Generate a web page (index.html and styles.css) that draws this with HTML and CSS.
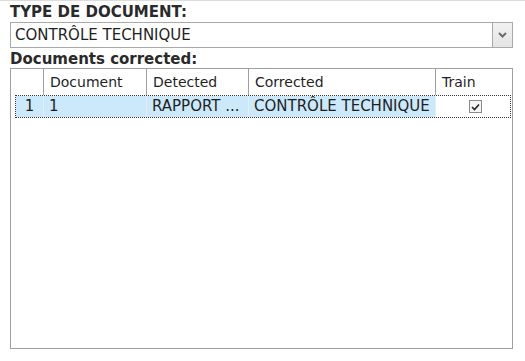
FILE: index.html
```html
<!DOCTYPE html>
<html>
<head>
<meta charset="utf-8">
<link rel="stylesheet" href="styles.css">
</head>
<body>
<div class="topline"></div>
<div class="panel">
  <div class="label">TYPE DE DOCUMENT:</div>
  <div class="combo">
    <div class="combo-text">CONTRÔLE TECHNIQUE</div>
    <div class="combo-btn">
      <svg width="9" height="6" viewBox="0 0 9 6"><path d="M1 1 L4.5 4.5 L8 1" fill="none" stroke="#6d6d6d" stroke-width="2"/></svg>
    </div>
  </div>
  <div class="label label2">Documents corrected:</div>
  <div class="grid">
    <div class="head">
      <div class="hc c0"></div>
      <div class="hc c1">Document</div>
      <div class="hc c2">Detected</div>
      <div class="hc c3">Corrected</div>
      <div class="hc c4">Train</div>
    </div>
    <div class="row">
      <div class="rc c0">1</div>
      <div class="rc c1">1</div>
      <div class="rc c2">RAPPORT ...</div>
      <div class="rc c3">CONTRÔLE TECHNIQUE</div>
      <div class="rc c4 train">
        <span class="check"><svg width="9" height="8" viewBox="0 0 9 8"><path d="M1 4 L3.5 6.5 L8 1.5" fill="none" stroke="#222" stroke-width="1.6"/></svg></span>
      </div>
    </div>
  </div>
</div>
</body>
</html>
```

FILE: styles.css
```css
html, body {
  margin: 0;
  padding: 0;
  background: #ffffff;
}
body {
  width: 525px;
  height: 361px;
  overflow: hidden;
  font-family: "DejaVu Sans", sans-serif;
  color: #1f1f1f;
}
.topline {
  height: 1px;
  background: #dcdcdc;
}
.panel {
  padding: 2px 12px 0 10px;
  display: flex;
  flex-direction: column;
}
.label {
  font-weight: bold;
  font-size: 15px;
  line-height: 18px;
  height: 19px;
  color: #2a2a2a;
}
.label2 {
  margin-top: 2px;
  height: 18px;
}
.combo {
  height: 24px;
  border: 1px solid #a9a9a9;
  display: flex;
  align-items: stretch;
}
.combo-text {
  flex: 1;
  font-size: 15px;
  line-height: 24px;
  padding-left: 4px;
}
.combo-btn {
  width: 19px;
  border-left: 1px solid #a9a9a9;
  background: linear-gradient(#f2f2f2, #e4e4e4);
  display: flex;
  align-items: center;
  justify-content: center;
}
.grid {
  height: 279px;
  border: 1px solid #a0a0a0;
  display: flex;
  flex-direction: column;
}
.head, .row {
  display: grid;
  grid-template-columns: 33px 103px 102px 187px 1fr;
}
.head {
  height: 25px;
}
.hc {
  font-size: 14px;
  line-height: 26px;
  padding-left: 6px;
  border-right: 1px solid #a0a0a0;
  color: #1f1f1f;
}
.hc.c4 {
  border-right: none;
}
.row {
  height: 21px;
  margin-top: 1px;
  margin-left: 4px;
  margin-right: 1px;
  border: 1px dotted #333;
  grid-template-columns: 28px 103px 102px 187px 1fr;
}
.rc {
  font-size: 15px;
  line-height: 21px;
  padding-left: 5px;
  background: #cce8fb;
  border-right: 1px solid #e6eef5;
  white-space: nowrap;
  overflow: hidden;
}
.rc.c0 {
  padding-left: 0;
  text-align: center;
}
.rc.train {
  background: #ffffff;
  border-right: none;
  display: flex;
  align-items: center;
  justify-content: center;
}
.check {
  width: 11px;
  height: 11px;
  border: 1px solid #8a8a8a;
  background: #f4f4f4;
  display: flex;
  align-items: center;
  justify-content: center;
}
```
